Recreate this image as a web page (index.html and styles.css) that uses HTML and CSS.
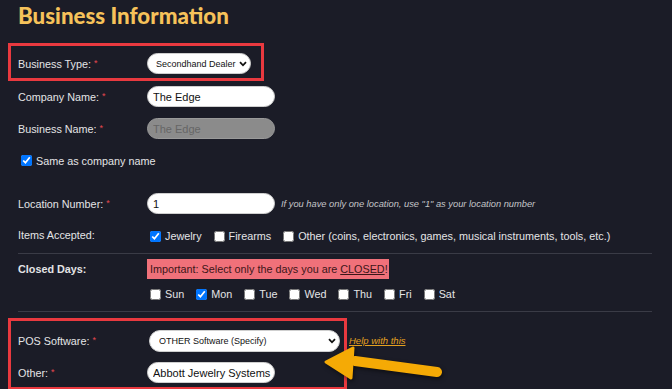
FILE: index.html
```html
<!DOCTYPE html>
<html>
<head>
  <meta charset="utf-8">
  <title>Business Information</title>
  <link rel="stylesheet" href="styles.css">
</head>
<body>
  <div class="page">
    <h1 class="page-title">Business Information</h1>

    <!-- 标注框: business type -->
    <div class="mark mark-type">
      <div class="row">
        <label class="row-label">Business Type: <span class="req">*</span></label>
        <span class="select-wrap select-type">
          <select class="pill-select">
            <option>Secondhand Dealer</option>
          </select>
          <svg class="chevron" width="8" height="6" viewBox="0 0 8 6"><path d="M1 1.2 L4 4.3 L7 1.2" fill="none" stroke="#111" stroke-width="1.8"/></svg>
        </span>
      </div>
    </div>

    <div class="row row-company">
      <label class="row-label">Company Name: <span class="req">*</span></label>
      <input type="text" class="pill-input" value="The Edge">
    </div>
    <div class="row row-stack">
      <label class="row-label">Business Name: <span class="req">*</span></label>
      <input type="text" class="pill-input" value="The Edge" disabled>
    </div>
    <div class="row row-stack same-row">
      <label class="check"><input type="checkbox" checked> Same as company name</label>
    </div>

    <div class="row row-location">
      <label class="row-label">Location Number: <span class="req">*</span></label>
      <input type="text" class="pill-input" value="1">
      <span class="hint">If you have only one location, use "1" as your location number</span>
    </div>
    <div class="row row-items">
      <label class="row-label">Items Accepted:</label>
      <div class="checks">
        <label class="check"><input type="checkbox" checked> Jewelry</label>
        <label class="check"><input type="checkbox"> Firearms</label>
        <label class="check"><input type="checkbox"> Other (coins, electronics, games, musical instruments, tools, etc.)</label>
      </div>
    </div>
    <hr class="rule">

    <div class="row row-closed">
      <label class="row-label strong">Closed Days:</label>
      <div class="notice">Important: Select only the days you are <u>CLOSED</u>!</div>
    </div>
    <div class="row row-days">
      <span class="row-label"></span>
      <div class="checks days">
        <label class="check"><input type="checkbox"> Sun</label>
        <label class="check"><input type="checkbox" checked> Mon</label>
        <label class="check"><input type="checkbox"> Tue</label>
        <label class="check"><input type="checkbox"> Wed</label>
        <label class="check"><input type="checkbox"> Thu</label>
        <label class="check"><input type="checkbox"> Fri</label>
        <label class="check"><input type="checkbox"> Sat</label>
      </div>
    </div>
    <hr class="rule rule-pos">

    <!-- 标注框: POS software -->
    <div class="mark mark-pos">
      <div class="row">
        <label class="row-label">POS Software: <span class="req">*</span></label>
        <span class="select-wrap select-pos">
          <select class="pill-select">
            <option>OTHER Software (Specify)</option>
          </select>
          <svg class="chevron" width="8" height="6" viewBox="0 0 8 6"><path d="M1 1.2 L4 4.3 L7 1.2" fill="none" stroke="#111" stroke-width="1.8"/></svg>
        </span>
        <a href="#" class="help-link">Help with this</a>
      </div>
      <div class="row row-other">
        <label class="row-label">Other: <span class="req">*</span></label>
        <input type="text" class="pill-input" value="Abbott Jewelry Systems">
      </div>
    </div>

    <svg class="arrow" width="130" height="50" viewBox="0 0 130 50">
      <line x1="116" y1="38" x2="34" y2="27" stroke="#f5aa05" stroke-width="10" stroke-linecap="round"/>
      <polygon points="5,28 32,14 30,44" fill="#f5aa05" stroke="#f5aa05" stroke-width="3" stroke-linejoin="round"/>
    </svg>
  </div>
</body>
</html>
```

FILE: styles.css
```css
:root {
    --bg: #1b1c27;
    --text: #e4e4e6;
    --gold: #f6c25a;
    --mark: #e9393f;
    --req: #e5484f;
    --rule: #3a3b46;
}

body {
    margin: 0;
    background: var(--bg);
    color: var(--text);
    font-family: "Liberation Sans", Arial, sans-serif;
    font-size: 10.8px;
    overflow: hidden;
}

.page {
    position: relative;
    padding: 0 10px 0 18px;
    height: 389px;
}

.page-title {
    margin: 0 0 11px;
    font-family: Lato, "Noto Sans", sans-serif;
    font-weight: 900;
    font-size: 22.3px;
    line-height: 32px;
    color: var(--gold);
}

/* 标注框 */
.mark {
    box-sizing: border-box;
    margin-left: -10px;
    border: 3px solid var(--mark);
    padding: 7px 0 0 7px;
}

.mark-type {
    width: 256px;
    height: 38px;
}

.mark-pos {
    width: 339px;
    height: 72px;
    margin-top: 6px;
    padding-top: 9px;
}

.row {
    display: flex;
    align-items: center;
    height: 21px;
    white-space: nowrap;
}

.row > * {
    flex-shrink: 0;
}

.row-label {
    width: 129px;
}

.row-label.strong {
    font-weight: bold;
}

.req {
    color: var(--req);
    font-size: 9px;
    vertical-align: top;
}

.row-company { margin-top: 5px; }
.row-stack { margin-top: 11px; }
.row-location { margin-top: 22px; }
.row-items { margin-top: 10px; }
.row-closed { margin-top: 5px; height: 20px; }
.row-days { margin-top: 5px; height: 20px; }
.row-other { margin-top: 11px; }

.same-row .check {
    margin-left: 3px;
}

.pill-input {
    box-sizing: border-box;
    width: 128px;
    height: 21px;
    padding: 0 2px 0 5px;
    border: 1px solid #cfcfcf;
    border-radius: 11px;
    background: #fff;
    color: #111;
    font-family: "Liberation Sans", Arial, sans-serif;
    font-size: 11px;
    outline: none;
}

.pill-input:disabled {
    background: #8b8b8b;
    border-color: #9a9a9a;
    color: #666;
}

/* 下拉框 */
.select-wrap {
    position: relative;
    display: inline-block;
    height: 21px;
}

.pill-select {
    appearance: none;
    -webkit-appearance: none;
    box-sizing: border-box;
    width: 100%;
    height: 100%;
    padding: 0 14px 0 8px;
    border: 1px solid #cfcfcf;
    border-radius: 11px;
    background: #fff;
    color: #111;
    font-family: "Liberation Sans", Arial, sans-serif;
    font-size: 9px;
    outline: none;
}

.chevron {
    position: absolute;
    right: 4px;
    top: 8px;
    pointer-events: none;
}

.select-type { width: 104px; }

.select-pos {
    width: 191px;
    height: 22px;
    margin-left: 2px;
}

.select-pos .pill-select {
    padding-left: 9px;
}

.hint {
    margin-left: 6px;
    font-size: 9.3px;
    font-style: italic;
    color: #c4c4c8;
}

.checks {
    display: flex;
    align-items: center;
    gap: 12px;
    margin-left: 3px;
    margin-top: 3px;
}

.days {
    gap: 12px;
    margin-top: 0;
}

.check {
    display: inline-flex;
    align-items: center;
    gap: 4px;
}

.check input {
    width: 11px;
    height: 11px;
    margin: 0;
}

.rule {
    border: none;
    border-top: 1px solid var(--rule);
    margin: 8px 10px 0 0;
}

.rule-pos {
    margin-top: 7px;
}

.notice {
    box-sizing: border-box;
    width: 242px;
    height: 20px;
    line-height: 20px;
    padding: 0 3px;
    background: #f0717a;
    color: #3c1518;
}

.help-link {
    margin-left: 9px;
    color: #e3a020;
    font-size: 9.5px;
    font-style: italic;
}

.arrow {
    position: absolute;
    left: 321px;
    top: 334px;
    filter: drop-shadow(1px 2px 2px rgba(0, 0, 0, 0.5));
}
```
